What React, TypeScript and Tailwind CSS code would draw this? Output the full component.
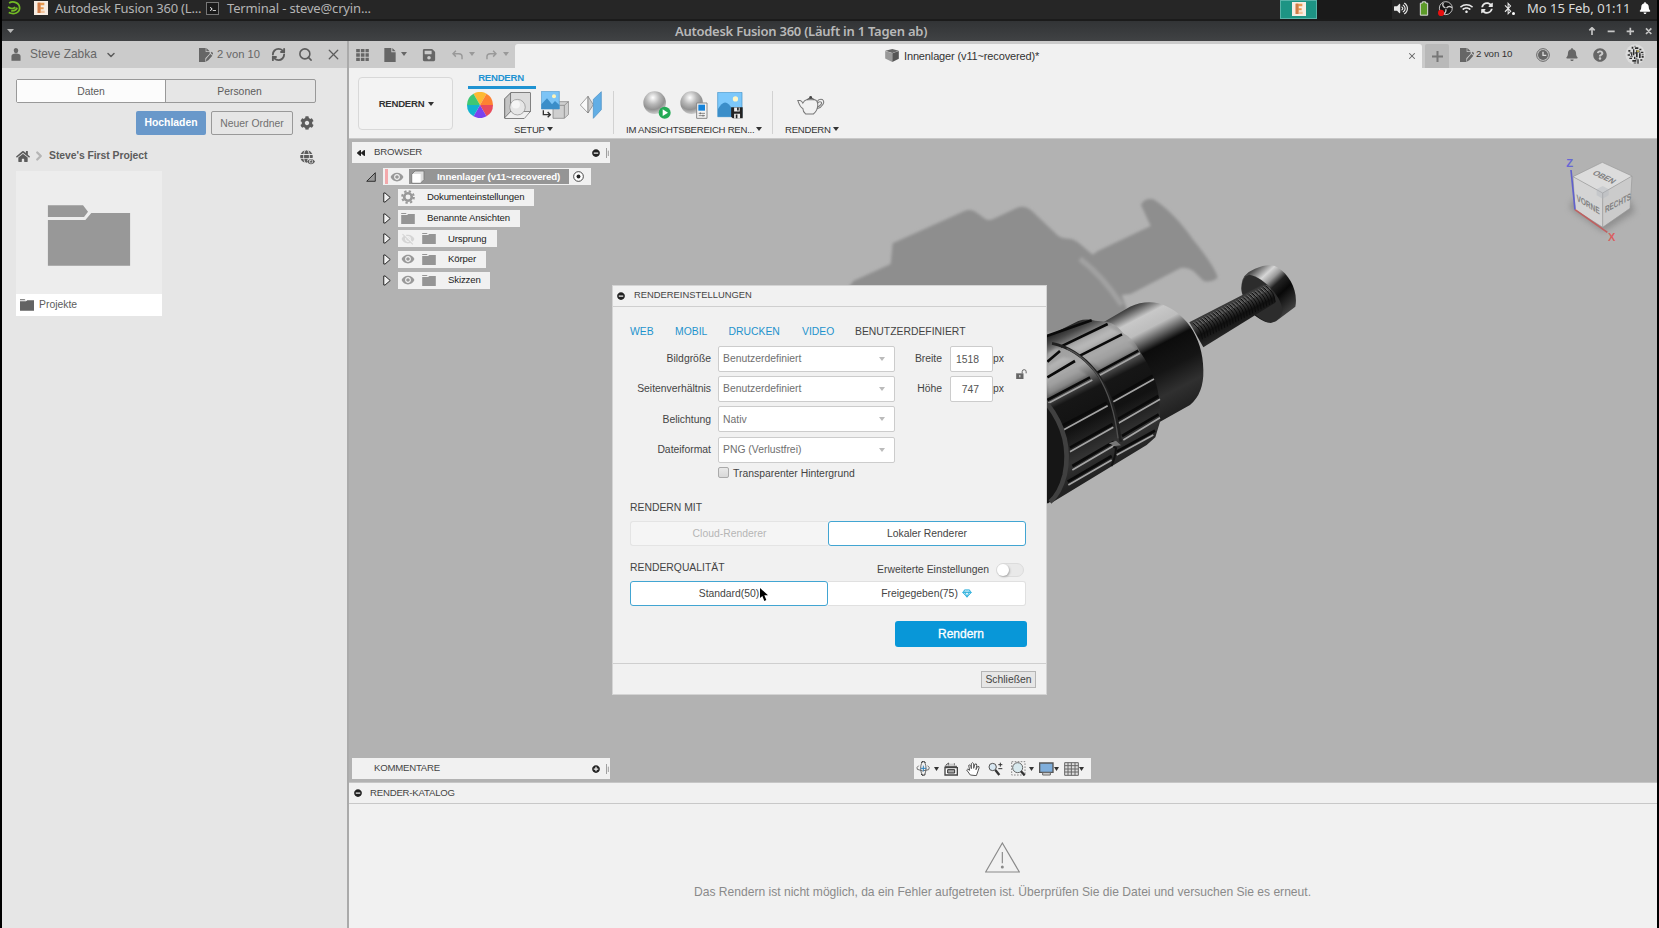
import React from "react";
import {
  FaHome, FaCog, FaBell, FaQuestionCircle, FaSave, FaWifi, FaVolumeUp,
  FaBluetoothB, FaSyncAlt, FaMinusCircle, FaPlusCircle, FaBackward, FaGlobe, FaEye, FaTerminal,
} from "react-icons/fa";
import { MdVisibility, MdVisibilityOff } from "react-icons/md";
import { RefreshCw, Search, X, ChevronDown, ChevronRight } from "lucide-react";

type IconProps = { box: string; className?: string; children: React.ReactNode };

function Icon({ box, className = "", children }: IconProps) {
  return (
    <svg viewBox={box} className={`shrink-0 ${className}`} fill="none">
      {children}
    </svg>
  );
}

function Folder({ className = "" }: { className?: string }) {
  return (
    <Icon box="0 0 42 34" className={className}>
      <path d="M0 0h14l3 3H0zM0 6h18l4-3h20v31H0z" fill="currentColor" />
    </Icon>
  );
}

function Caret({ className = "h-[5px] w-[6px]" }: { className?: string }) {
  return (
    <svg viewBox="0 0 16 12" preserveAspectRatio="none" className={`shrink-0 ${className}`}>
      <path d="M0 0h16L8 12z" fill="currentColor" />
    </svg>
  );
}

function DocPen({ className = "" }: { className?: string }) {
  return (
    <Icon box="0 0 42 42" className={className}>
      <path d="M0 0h20v12h12v5L19 31v11H0zM22 0l10 10H22z" fill="currentColor" />
      <path d="m22 32 12-14 6 5-12 14-8 4zM35 14l3-3 5 5-3 4z" fill="currentColor" />
    </Icon>
  );
}

function FusionLogo({ className = "" }: { className?: string }) {
  return (
    <Icon box="0 0 42 42" className={className}>
      <rect width="42" height="42" fill="#f8ede3" />
      <path d="M11 5h20v8H20v6h9v6h-9v11h-9z" fill="#e89a50" />
      <path d="M11 5h8v31h-8z" fill="#cf7c4a" />
      <path d="M21 29h11v7H21z" fill="#f3c49c" />
    </Icon>
  );
}

function DesktopBar() {
  return (
    <div className="flex h-[21px] shrink-0 items-start border-b-2 border-[#1b1b1b] bg-[#262626] font-['Noto_Sans',sans-serif] text-[13px] leading-[17px] text-[#b4b4b4]">
      <div className="flex w-[1280px] items-start">
        <Icon box="0 0 40 40" className="ml-[5px] mt-[1px] h-[14px] w-[14px]">
          <path d="M6 6c12-8 30 0 30 14S20 40 5 33M3 17c8 6 16 5 21 1M12 28c9 1 15-3 17-9" stroke="#73ba25" strokeWidth="5" />
        </Icon>
        <FusionLogo className="ml-[13px] mt-[1px] h-[14px] w-[14px]" />
        <span className="ml-[7px] w-[151px] whitespace-nowrap tracking-[-0.2px]">Autodesk Fusion 360 (L...</span>
        <span className="mt-[2px] flex h-[13px] w-[13px] items-center justify-center border border-[#777] bg-[#1a1a1a] text-[6px] text-white">
          <FaTerminal />
        </span>
        <span className="ml-[8px] whitespace-nowrap tracking-[-0.16px]">Terminal - steve@cryin...</span>
      </div>
      <div className="-ml-[2px] flex h-[19px] w-[37px] justify-center border border-[#58b3a8] bg-[#1d9484] pt-[1px]">
        <FusionLogo className="h-[14px] w-[14px]" />
      </div>
      <div className="h-[19px] w-[75px] bg-[#1a1a1a]" />
      <FaVolumeUp className="ml-[2px] mt-[2px] h-[13px] w-[14px] text-[#e8e8e8]" />
      <Icon box="0 0 30 44" className="ml-[11px] mt-[1px] h-[15px] w-[10px]">
        <path d="M4 6h6V2h10v4h6v36H4z" fill="#5c9a28" stroke="#ddd" strokeWidth="3" />
      </Icon>
      <Icon box="0 0 44 44" className="ml-[9px] mt-[1px] h-[15px] w-[15px]">
        <circle cx="23" cy="21" r="19" fill="#171717" stroke="#ddd" strokeWidth="2.5" />
        <path d="M22 20c-8-2-10-9-6-14M25 21c5-7 12-6 16-1M23 24c2 9-4 14-10 13" stroke="#ccc" strokeWidth="4" />
        <circle cx="9" cy="35" r="9" fill="#e81010" />
      </Icon>
      <FaWifi className="ml-[7px] mt-[3px] h-[11px] w-[13px] text-[#e8e8e8]" />
      <FaSyncAlt className="ml-[8px] mt-[2px] h-[12px] w-[12px] text-[#e8e8e8]" />
      <span className="ml-[9px] mt-[2px] flex items-end text-[#e8e8e8]">
        <FaBluetoothB className="h-[13px] w-[12px]" />
        <span className="-ml-[2px] h-[3px] w-[3px] rounded-full bg-white" />
      </span>
      <span className="ml-[12px] w-[98px] whitespace-nowrap text-[#dadada]">Mo 15 Feb, 01:11</span>
      <FaBell className="ml-[14px] mt-[2px] h-[12px] w-[12px] text-white" />
    </div>
  );
}

function TitleBar() {
  return (
    <div className="flex h-[20px] shrink-0 items-center bg-gradient-to-b from-[#323436] to-[#404244] font-['Noto_Sans',sans-serif] text-[#b9b9b9]">
      <Caret className="ml-[5px] h-[4px] w-[7px]" />
      <span className="flex-1 pl-[61px] pr-[61px] text-center text-[13px] font-semibold leading-none tracking-[-0.25px]">
        Autodesk Fusion 360 (Läuft in 1 Tagen ab)
      </span>
      <Icon box="0 0 192 24" className="mr-[5px] h-[8px] w-[64px]">
        <path d="M12 24V3M4 10l8-8 8 8M59 13h21M116 13h22M127 2v22M174 4l16 17M190 4l-16 17" stroke="#c6c6c6" strokeWidth="5" />
      </Icon>
    </div>
  );
}

function DataPanel() {
  return (
    <aside className="flex w-[345px] shrink-0 flex-col bg-[#e6e6e6] text-[10.4px] text-[#5c5c5c]">
      <header className="flex h-[27px] shrink-0 items-center bg-[#cbcbcb]">
        <Icon box="0 0 28 40" className="ml-[9px] h-[13px] w-[10px] text-[#666]">
          <path d="M7 8a7 8 0 0 1 14 0 7 8 0 0 1-14 0M0 39V25q0-8 14-8t14 8v14z" fill="currentColor" />
        </Icon>
        <span className="ml-[9px] w-[67px] whitespace-nowrap text-[11.9px] text-[#666]">Steve Zabka</span>
        <ChevronDown className="ml-[8px] h-[12px] w-[12px]" strokeWidth={3} />
        <DocPen className="ml-[82px] h-[14px] w-[14px] text-[#666]" />
        <span className="ml-[4px] w-[44px] whitespace-nowrap text-[11.2px] text-[#666]">2 von 10</span>
        <RefreshCw className="ml-[10px] h-[15px] w-[15px]" strokeWidth={3} />
        <Search className="ml-[12px] h-[15px] w-[15px]" strokeWidth={2.5} />
        <X className="ml-[12px] h-[17px] w-[17px]" strokeWidth={1.8} />
      </header>
      <div className="ml-[14px] mt-[11px] flex h-[24px] w-[300px] rounded-[2px] border border-[#999] leading-[23px]">
        <div className="w-[149px] border-r border-[#999] bg-[#fcfcfc] text-center">Daten</div>
        <div className="flex-1 pr-[2px] text-center">Personen</div>
      </div>
      <div className="ml-[134px] mt-[8px] flex h-[24px] items-center">
        <div className="h-[24px] w-[70px] rounded-[2px] bg-[#6998ca] text-center font-bold leading-[24px] text-white">Hochladen</div>
        <div className="ml-[5px] h-[24px] w-[82px] rounded-[2px] border border-[#999] text-center leading-[24px] text-[#707070]">Neuer Ordner</div>
        <FaCog className="ml-[7px] h-[14px] w-[14px] text-[#5c5c5c]" />
      </div>
      <div className="ml-[14px] mt-[11px] flex h-[20px] items-center">
        <FaHome className="h-[13px] w-[14px]" />
        <ChevronRight className="ml-[2px] h-[14px] w-[14px] text-[#b5b5b5]" strokeWidth={4} />
        <span className="ml-[3px] w-[251px] whitespace-nowrap font-bold tracking-[-0.05px]">Steve's First Project</span>
        <span className="relative">
          <FaGlobe className="h-[13px] w-[13px]" />
          <FaEye className="absolute -bottom-[2px] -right-[2px] h-[7px] w-[8px] rounded-full bg-[#e6e6e6]" />
        </span>
      </div>
      <div className="ml-[14px] mt-[5px] w-[146px]">
        <div className="h-[123px] bg-[#ededed] pl-[31px] pt-[34px]">
          <Icon box="0 0 250 184" className="h-[61px] w-[84px]">
            <path d="M1 1h106l15 19-12 16H1zM1 45h113l18-21h117v159H1z" fill="#989898" />
          </Icon>
        </div>
        <div className="flex h-[22px] items-center bg-white">
          <Folder className="ml-[4px] h-[12px] w-[14px] text-[#636363]" />
          <span className="ml-[5px] pb-[1px]">Projekte</span>
        </div>
      </div>
    </aside>
  );
}

function TabBar() {
  return (
    <div className="flex h-[27px] shrink-0 items-end bg-[#cbcbcb] text-[#666]">
      <div className="flex h-[27px] w-[166px] shrink-0 items-center">
        <Icon box="0 0 38 36" className="ml-[7px] h-[12px] w-[13px]">
          <path d="M0 0h11v10H0zM14 0h11v10H14zM28 0h10v10H28zM0 13h11v10H0zM14 13h11v10H14zM28 13h10v10H28zM0 26h11v10H0zM14 26h11v10H14zM28 26h10v10H28z" fill="currentColor" />
        </Icon>
        <Icon box="0 0 34 42" className="ml-[15px] h-[14px] w-[12px]">
          <path d="M0 0h21v13h13v29H0zM24 0l10 10H24z" fill="currentColor" />
        </Icon>
        <Caret className="-mt-px ml-[5px] h-[4px] w-[6px]" />
        <FaSave className="ml-[15px] h-[14px] w-[14px]" />
        <Icon box="0 0 34 30" className="ml-[16px] h-[10px] w-[11px] text-[#999]">
          <path d="M12 2 3 11l9 9M3 11h18q10 0 10 9v8" stroke="currentColor" strokeWidth="4.5" />
        </Icon>
        <Caret className="-mt-px ml-[6px] h-[4px] w-[6px] text-[#999]" />
        <Icon box="0 0 34 30" className="ml-[11px] h-[10px] w-[11px] text-[#999]">
          <path d="m22 2 9 9-9 9M31 11H13Q3 11 3 20v8" stroke="currentColor" strokeWidth="4.5" />
        </Icon>
        <Caret className="-mt-px ml-[6px] h-[4px] w-[6px] text-[#999]" />
      </div>
      <div className="flex h-[24px] w-[907px] shrink-0 items-center rounded-t-[3px] bg-[#f1f1f1]">
        <Icon box="0 0 42 40" className="ml-[370px] mt-[-1px] h-[13px] w-[14px]">
          <path d="m0 5 22-5 20 5-20 7z" fill="#666" />
          <path d="m0 6 22 7v27L0 29z" fill="#999" />
          <path d="m22 13 20-7v24L22 40z" fill="#555" />
        </Icon>
        <span className="ml-[5px] w-[490px] whitespace-nowrap text-[11px] tracking-[-0.14px] text-[#333]">Innenlager (v11~recovered)*</span>
        <X className="ml-[13px] h-[10px] w-[10px]" strokeWidth={2.5} />
      </div>
      <div className="ml-[3px] flex h-[24px] w-[24px] items-center justify-center rounded-t-[2px] bg-[#b9b9b9]">
        <Icon box="0 0 33 33" className="h-[11px] w-[11px]">
          <path d="M16.5 0v33M0 16.5h33" stroke="#777" strokeWidth="6" />
        </Icon>
      </div>
      <div className="flex h-[27px] items-center">
        <DocPen className="ml-[11px] h-[14px] w-[14px]" />
        <span className="ml-[2px] w-[39px] whitespace-nowrap text-[9.7px] tracking-[-0.1px] text-[#333]">2 von 10</span>
        <Icon box="0 0 42 42" className="ml-[21px] h-[14px] w-[14px]">
          <circle cx="21" cy="21" r="19" stroke="currentColor" strokeWidth="3" />
          <circle cx="21" cy="21" r="15" fill="currentColor" />
          <path d="M21 11v11h10" stroke="#ddd" strokeWidth="4" />
        </Icon>
        <FaBell className="ml-[16px] h-[13px] w-[12px]" />
        <FaQuestionCircle className="ml-[15px] h-[14px] w-[14px]" />
        <Icon box="0 0 63 63" className="ml-[18px] h-[21px] w-[21px]">
          <circle cx="31" cy="31" r="30" fill="#dcdcdc" />
          <path d="M10 18h6v5h-6zM8 31h7v4H8zM13 41h8v4h-8zM20 8h5v6h-5zM24 16h4v18h-4zM30 10h10v5H30zM33 19h5v21h-5zM43 14h6v5h-6zM47 23h8v4h-8zM42 28h5v14h-5zM50 35h6v6h-6zM18 25h4v10h-4zM22 48h12v5H22zM37 46h4v13h-4zM27 38h4v7h-4zM46 46h6v4h-6z" fill="#2c2c2c" />
          <path d="M14 24h5v5h-5zM28 5h4v5h-4zM28 24h5v6h-5zM39 20h6v6h-6zM15 36h9v4h-9zM31 42h6v5h-6zM50 29h6v4h-6zM26 55h8v4h-8z" fill="#777" />
          <path d="M35 19h7v5h-7z" fill="#b3a24a" />
        </Icon>
      </div>
    </div>
  );
}

function Disk() {
  return (
    <g>
      <path d="M42 46h35v34H47l-5-5z" fill="#222" />
      <path d="M51 47h17v12H51zM51 66h18v14H51z" fill="#eee" />
      <path d="M60 47h5v9h-5zM56 68h5v12h-5z" fill="#222" />
    </g>
  );
}

function Sphere({ id }: { id: string }) {
  return (
    <g>
      <defs>
        <radialGradient id={id} cx="0.42" cy="0.28" r="0.75">
          <stop offset="0" stopColor="#fff" />
          <stop offset="0.4" stopColor="#b8b8b8" />
          <stop offset="0.7" stopColor="#929292" />
          <stop offset="1" stopColor="#d5d5d5" />
        </radialGradient>
      </defs>
      <circle cx="35" cy="35" r="34" fill={`url(#${id})`} />
    </g>
  );
}

const wheel = [
  ["M39 39 19.500 5.200A39 39 0 0 1 58.500 5.200Z", "#fdb932"],
  ["M39 39 58.500 5.200A39 39 0 0 1 78 39Z", "#fd8232"],
  ["M39 39 78 39A39 39 0 0 1 58.500 72.800Z", "#e94b5c"],
  ["M39 39 58.500 72.800A39 39 0 0 1 19.500 72.800Z", "#7a42f0"],
  ["M39 39 19.500 72.800A39 39 0 0 1 0 39Z", "#12b3cf"],
  ["M39 39 0 39A39 39 0 0 1 19.500 5.200Z", "#3fc773"],
];

function RibbonLabel({ children }: { children: string }) {
  return (
    <div className="flex h-[11px] items-end whitespace-nowrap text-[9.6px] leading-[11px] tracking-[-0.26px] text-[#333]">
      {children}
      <Caret className="mb-[4px] ml-[2px] h-[4px] w-[6px]" />
    </div>
  );
}

function Ribbon() {
  return (
    <div className="flex h-[71px] shrink-0 border-b border-[#c9c9c9] bg-[#f1f1f1]">
      <div className="ml-[9px] mt-[9px] flex h-[53px] w-[95px] items-center justify-center rounded-[4px] border border-[#d8d8d8] bg-[#f3f3f3] text-[9.6px] font-bold tracking-[-0.25px] text-[#333]">
        <span className="pl-[2px] pt-px">RENDERN</span>
        <Caret className="ml-[4px] h-[4px] w-[6px]" />
      </div>
      <div className="ml-[15px] w-[145px]">
        <div className="h-[21px] w-[68px] border-b-[3px] border-[#1f93d2] pr-[2px] pt-[3px] text-center text-[9.6px] font-bold leading-[13px] tracking-[-0.25px] text-[#1f93d2]">RENDERN</div>
        <div className="flex h-[35px] items-start pt-[3px]">
          <Icon box="0 0 78 78" className="-ml-px h-[26px] w-[26px]">
            {wheel.map(([d, fill]) => (
              <path key={fill} d={d} fill={fill} />
            ))}
          </Icon>
          <Icon box="0 0 80 80" className="ml-[11px] h-[27px] w-[27px]">
            <path d="M2 20 20 2h58v56L60 78H2z" fill="#c4c4c4" stroke="#555" strokeWidth="2.500" />
            <path d="M20 2v56H78M20 58 2 77" stroke="#555" strokeWidth="2.500" />
            <path d="M21 3h56v54H21z" fill="#dcdcdc" />
            <path d="M3 77 20 59h56L60 77z" fill="#efefef" />
            <circle cx="40" cy="45" r="23" fill="#e6e6e6" stroke="#888" strokeWidth="2" />
            <circle cx="35" cy="37" r="12" fill="#f5f5f5" />
          </Icon>
          <Icon box="0 0 84 84" className="-mt-px ml-[10px] h-[28px] w-[28px]">
            <path d="M36 42 48 32h35v38L70 82H36z" fill="#cfcfcf" stroke="#777" strokeWidth="2" />
            <path d="M36 43h34v38M70 43l12-11" stroke="#777" strokeWidth="2" />
            <path d="M1 1h54v53H1z" fill="#7cc4f6" stroke="#5597c8" strokeWidth="2" />
            <path d="M1 54V40l17-18 15 18 9-10 13 12v12z" fill="#3b8ec9" />
            <circle cx="39" cy="16" r="6" fill="#fff3b8" />
            <path d="M0 57h33v27H0z" fill="#f1f1f1" />
            <path d="M7 58v13h20M20 63l8 8-8 8" stroke="#333" strokeWidth="4" />
          </Icon>
          <Icon box="0 0 66 84" className="-mt-px ml-[11px] h-[28px] w-[22px]">
            <path d="M1 42 24 16v50z" fill="#fafafa" stroke="#777" strokeWidth="2" />
            <path d="m24 16 16 25-16 25z" fill="#ccc" stroke="#777" strokeWidth="2" />
            <path d="m40 25 24-23v54L40 82z" fill="#62aee5" stroke="#458cc2" strokeWidth="2" />
          </Icon>
        </div>
        <div className="flex pl-[46px]"><RibbonLabel>SETUP</RibbonLabel></div>
      </div>
      <div className="mt-[23px] h-[43px] w-px bg-[#d2d2d2]" />
      <div className="ml-[12px] mt-[23px] w-[146px]">
        <div className="flex h-[33px] items-start pl-[17px]">
          <Icon box="0 0 84 84" className="h-[28px] w-[28px]">
            <Sphere id="sphere-run" />
            <circle cx="65" cy="65" r="18" fill="#23aa55" />
            <path d="m59 55 16 10-16 10z" fill="#fff" />
          </Icon>
          <Icon box="0 0 84 84" className="ml-[9px] h-[28px] w-[28px]">
            <Sphere id="sphere-settings" />
            <path d="M50 36h31v46H50z" fill="#f4f4f4" stroke="#888" strokeWidth="3" />
            <path d="M55 41h20v18H55z" fill="#1583da" />
            <path d="M56 67h19M56 74h19M61 64v6M69 71v6" stroke="#555" strokeWidth="2" />
          </Icon>
          <Icon box="0 0 80 82" className="ml-[9px] mt-px h-[27px] w-[27px]">
            <path d="M1 1h74v74H1z" fill="#7cc8fb" stroke="#3f8fc4" strokeWidth="2" />
            <path d="M2 75V52q22-40 43 0v23z" fill="#3b8ec9" />
            <circle cx="55" cy="21" r="8" fill="#fff6c6" />
            <Disk />
          </Icon>
        </div>
        <RibbonLabel>IM ANSICHTSBEREICH REN...</RibbonLabel>
      </div>
      <div className="mt-[23px] h-[43px] w-px bg-[#d2d2d2]" />
      <div className="ml-[12px] mt-[23px]">
        <div className="flex h-[33px] items-start pl-[12px] pt-[5px]">
          <Icon box="0 0 82 56" className="h-[19px] w-[28px]">
            <path d="M2 13h7q5 1 8 8 4-8 11-10h24q8 2 9 14 0 18-13 28H25q-8-7-8-16Q9 34 2 13zM59 17q4-9 15-7 8 6 2 15-6 10-16 12M60 22q5-7 11-4 3 4-2 8-4 5-9 6" stroke="#777" strokeWidth="3" />
            <path d="M29 11q11-8 22 0" stroke="#666" strokeWidth="3" />
            <circle cx="40" cy="4" r="4" fill="#444" />
          </Icon>
        </div>
        <RibbonLabel>RENDERN</RibbonLabel>
      </div>
    </div>
  );
}

const threads = Array.from({ length: 27 }, (_, i) => ({ x: 1060 + i * 8.4, y: 430 - i * 4.3 }));

const lightGrooves =
  "M625 670 757 600M670 750 803 677M690 815 820 742M697 870 825 795M685 915 815 840M775 588 900 520M820 665 942 597M835 730 960 658M850 780 960 713M830 825 940 765";
const darkGrooves =
  "M620 468 755 421M662 500 803 432M622 545 660 513M622 592 705 543M720 527 846 463M772 578 895 512M818 655 938 587M832 718 955 648M846 768 956 703M622 660 750 592M665 738 800 668M690 803 818 732M697 858 822 785M683 905 815 828M830 815 945 752";
const litFacets =
  "M672 502 800 438 838 458 722 516zM738 530 850 474 892 506 780 566zM624 520 648 505 664 507 626 532zM624 558 668 532 700 536 626 578zM624 606 706 560 742 584 626 646z";

function Model() {
  return (
    <svg viewBox="0 0 1440 1020" className="absolute left-[491px] top-[41px] h-[340px] w-[480px]" fill="none">
      <defs>
        <filter id="soft" x="-10%" y="-10%" width="120%" height="120%"><feGaussianBlur stdDeviation="5" /></filter>
        <filter id="sheen" x="-10%" y="-10%" width="120%" height="120%"><feGaussianBlur stdDeviation="3" /></filter>
        <linearGradient id="collar" gradientUnits="userSpaceOnUse" x1="840" y1="390" x2="1010" y2="719">
          <stop offset="0" stopColor="#2a2a2a" /><stop offset="0.05" stopColor="#606060" /><stop offset="0.13" stopColor="#c8c8c8" />
          <stop offset="0.24" stopColor="#bdbdbd" /><stop offset="0.33" stopColor="#5a5a5a" /><stop offset="0.4" stopColor="#0c0c0c" />
          <stop offset="0.6" stopColor="#151515" /><stop offset="0.78" stopColor="#303030" /><stop offset="1" stopColor="#1c1c1c" />
        </linearGradient>
        <linearGradient id="knurl" gradientUnits="userSpaceOnUse" x1="680" y1="430" x2="880" y2="830">
          <stop offset="0" stopColor="#161616" /><stop offset="0.07" stopColor="#4a4a4a" /><stop offset="0.15" stopColor="#a0a0a0" />
          <stop offset="0.29" stopColor="#a8a8a8" /><stop offset="0.38" stopColor="#666" /><stop offset="0.47" stopColor="#161616" /><stop offset="0.65" stopColor="#121212" />
          <stop offset="0.85" stopColor="#333" /><stop offset="1" stopColor="#222" />
        </linearGradient>
        <linearGradient id="facet" gradientUnits="userSpaceOnUse" x1="700" y1="440" x2="780" y2="600">
          <stop offset="0" stopColor="#777" /><stop offset="0.35" stopColor="#b8b8b8" /><stop offset="0.7" stopColor="#a0a0a0" /><stop offset="1" stopColor="#5a5a5a" />
        </linearGradient>
        <linearGradient id="head" gradientUnits="userSpaceOnUse" x1="1240" y1="260" x2="1360" y2="390">
          <stop offset="0" stopColor="#333" /><stop offset="0.24" stopColor="#d6d6d6" /><stop offset="0.36" stopColor="#999" /><stop offset="0.48" stopColor="#222" />
          <stop offset="0.65" stopColor="#080808" /><stop offset="1" stopColor="#444" />
        </linearGradient>
        <linearGradient id="shaft" gradientUnits="userSpaceOnUse" x1="1150" y1="370" x2="1190" y2="450">
          <stop offset="0" stopColor="#333" /><stop offset="0.25" stopColor="#484848" /><stop offset="0.6" stopColor="#101010" /><stop offset="1" stopColor="#282828" />
        </linearGradient>
      </defs>
      <g filter="url(#soft)">
        <path d="M20 330 40 303 152 252 158 190 372 94Q390 86 406 95L436 117Q446 123 458 118L530 84Q552 74 575 92L655 168Q668 177 688 176 705 178 720 192L758 224 775 212 932 138 903 75Q912 54 940 58 1000 95 1060 180 1125 260 1133 293 1110 310 1090 302L1060 273Q1040 260 1022 264L872 342 845 345 862 390 800 460H560V330z" fill="#8e8e8e" />
        <path d="M720 236Q790 290 845 375" stroke="#a2a2a2" strokeWidth="15" />
      </g>
      <path d="M1204 315Q1206 282 1245 266 1290 248 1312 262C1350 285 1375 335 1366 380L1308 424Q1292 431 1275 425C1235 410 1200 360 1204 315Z" fill="url(#head)" />
      <path d="M1204 325Q1206 289 1228 284C1270 292 1322 345 1328 390Q1324 420 1292 429C1245 420 1204 360 1204 325Z" fill="#2c2c2c" />
      <path d="M1048 427 1270 313Q1305 325 1306 368L1090 502z" fill="url(#shaft)" />
      {threads.map(({ x, y }) => (
        <path key={x} d={`M${x} ${y}q26 20 27 48`} stroke="#0b0b0b" strokeWidth="3" />
      ))}
      {threads.map(({ x, y }) => (
        <path key={x} d={`M${x} ${y - 3}q8 4 13 13`} stroke="#858585" strokeWidth="2" />
      ))}
      <path d="M790 427 870 380Q915 360 955 370C1030 390 1090 470 1090 570Q1092 640 1050 675L955 728 880 520z" fill="url(#collar)" />
      <path d="M600 480 715 423Q740 415 765 422L800 425Q830 432 850 460 880 475 900 515 925 550 940 590 962 635 960 725L946 772 920 795 640 965 610 970z" fill="url(#knurl)" />
      <path d={litFacets} fill="url(#facet)" filter="url(#sheen)" />
      <path d={darkGrooves} stroke="#0a0a0a" strokeWidth="8" />
      <path d={lightGrooves} stroke="#a5a5a5" strokeWidth="5" />
      <path d="M636 490Q710 505 765 572 825 650 842 785" stroke="#202020" strokeWidth="8" />
      <path d="M680 505Q735 530 775 588 820 660 834 775" stroke="#505050" strokeWidth="4" />
      <path d="M600 660C670 720 690 800 674 900L625 970H600z" fill="#161616" />
      <path d="M622 672C675 740 690 810 674 885Q660 940 630 966" stroke="#404040" strokeWidth="14" />
      <path d="m806 790 22-8 15 14-18 2z" fill="#777" />
      <path d="m820 800 8 4q-2 30-14 54" stroke="#111" strokeWidth="6" />
    </svg>
  );
}

function ViewCube() {
  return (
    <svg viewBox="0 0 357 330" className="absolute left-[1191px] top-[1px] h-[110px] w-[119px]" fill="none">
      <defs><filter id="cubeShadow" x="-30%" y="-30%" width="160%" height="160%"><feGaussianBlur stdDeviation="9" /></filter></defs>
      <path d="M90 205 190 275 285 215 270 180 100 180z" fill="#777" opacity="0.6" filter="url(#cubeShadow)" />
      <path d="m99 110 88-43 89 41-88 51z" fill="#dcdcdc" />
      <path d="m99 110 89 49v103l-83-53z" fill="#d4d4d4" />
      <path d="m276 108-88 51v103l82-57z" fill="#cbcbcb" />
      <path d="m99 110 88-43 89 41-88 51zM188 159v103M99 110l6 99 83 53 82-57 6-97" stroke="#999" strokeWidth="2" />
      <path d="m170 148 18-10 18 10v18l-18 10-18-10z" fill="#aeb4bc" opacity="0.4" />
      <path d="m93 90 12 119" stroke="#6060cc" strokeWidth="5" />
      <path d="m105 209 97 68" stroke="#c06060" strokeWidth="5" />
      <g fontFamily="Liberation Sans, sans-serif" fontWeight="bold" fill="#808080">
        <text transform="matrix(.8 .38 -.72 .6 155 102)" fontSize="27">OBEN</text>
        <text transform="matrix(.7 .42 .05 1 110 182)" fontSize="28">VORNE</text>
        <text transform="matrix(.68 -.36 0 1 195 219)" fontSize="28">RECHTS</text>
        <text x="79" y="82" fontSize="34" fill="#6767d4">Z</text>
        <text x="204" y="302" fontSize="33" fill="#da6060">X</text>
      </g>
    </svg>
  );
}

function PanelGrip() {
  return (
    <Icon box="0 0 9 30" className="ml-[6px] h-[10px] w-[3px]">
      <path d="M1.500 0v30M7 8v16" stroke="#777" strokeWidth="2" />
    </Icon>
  );
}

type Row = { label: string; icon: "gear" | "folder"; eye?: "on" | "off"; width: string };
const rows: Row[] = [
  { label: "Dokumenteinstellungen", icon: "gear", width: "w-[136px]" },
  { label: "Benannte Ansichten", icon: "folder", width: "w-[122px]" },
  { label: "Ursprung", icon: "folder", eye: "off", width: "w-[99px]" },
  { label: "Körper", icon: "folder", eye: "on", width: "w-[88px]" },
  { label: "Skizzen", icon: "folder", eye: "on", width: "w-[92px]" },
];

function BrowserTree() {
  return (
    <div className="absolute left-[3px] top-[3px] w-[258px] text-[9.6px] tracking-[-0.14px] text-[#222]">
      <div className="flex h-[21px] items-center bg-[#f1f1f1]">
        <FaBackward className="ml-[5px] h-[8px] w-[8px]" />
        <span className="ml-[9px] w-[218px] tracking-[-0.22px] text-[#444]">BROWSER</span>
        <FaMinusCircle className="h-[8px] w-[8px]" />
        <PanelGrip />
      </div>
      <div className="mt-[5px] flex h-[17px] items-center">
        <Icon box="0 0 28 28" className="ml-[14px] h-[10px] w-[10px]">
          <path d="M26 2v24H2z" fill="#999" stroke="#222" strokeWidth="2.500" />
        </Icon>
        <div className="ml-[7px] flex h-[17px] w-[208px] items-center bg-[#f1f1f1]">
          <span className="ml-[2px] h-[15px] w-[3px] bg-[#f3a9ac]" />
          <MdVisibility className="ml-[2px] h-[14px] w-[14px] text-[#999]" />
          <div className="ml-[5px] flex h-[15px] w-[160px] items-center bg-[#959595]">
            <Icon box="0 0 42 42" className="ml-[2px] h-[14px] w-[14px]">
              <path d="M3 12 12 3h27v26L29 39H3z" fill="#ddd" stroke="#777" strokeWidth="2.500" />
              <path d="M4 12h25v26H4z" fill="#fff" />
            </Icon>
            <span className="ml-[12px] whitespace-nowrap pt-px text-[9.7px] font-bold tracking-[-0.1px] text-white">Innenlager (v11~recovered)</span>
          </div>
          <Icon box="0 0 34 34" className="ml-[4px] h-[11px] w-[11px]">
            <circle cx="17" cy="17" r="15" stroke="#222" strokeWidth="2.500" fill="#fff" />
            <circle cx="17" cy="17" r="6" fill="#222" />
          </Icon>
        </div>
      </div>
      <div className="mt-[1.500px] flex flex-col">
        {rows.map((r) => (
          <div key={r.label} className="mt-[1px] flex h-[19.700px] items-center">
            <Icon box="0 0 24 34" className="ml-[31px] h-[11px] w-[8px]">
              <path d="M2 3v28h4L22 17 6 3z" fill="#eee" stroke="#222" strokeWidth="3" />
            </Icon>
            <div className={`ml-[7px] flex h-[17px] items-center whitespace-nowrap bg-[#f1f1f1] ${r.width}`}>
              {r.eye && (
                <span className={`ml-[3px] w-[18px] ${r.eye === "on" ? "text-[#999]" : "text-[#d5d5d5]"}`}>
                  {r.eye === "on" ? <MdVisibility className="h-[14px] w-[14px]" /> : <MdVisibilityOff className="h-[14px] w-[14px]" />}
                </span>
              )}
              {r.icon === "gear" ? (
                <Icon box="0 0 24 24" className="ml-[3px] h-[14px] w-[14px]">
                  <circle cx="12" cy="12" r="10" stroke="#999" strokeWidth="3.500" strokeDasharray="4 3.850" />
                  <circle cx="12" cy="12" r="6.500" stroke="#999" strokeWidth="4.500" />
                </Icon>
              ) : (
                <Folder className="ml-[3px] h-[11px] w-[14px] text-[#959595]" />
              )}
              <span className="ml-[12px]">{r.label}</span>
            </div>
          </div>
        ))}
      </div>
    </div>
  );
}

function Field({ label, value }: { label: string; value: string }) {
  return (
    <div className="mb-[4.200px] flex h-[26px] items-center">
      <span className="w-[81px] pr-[7px] text-right">{label}</span>
      <div className="flex h-[26px] w-[177px] items-center justify-between rounded-[2px] border border-[#ccc] bg-white pl-[4px] pr-[9px] text-[#707070]">
        {value}
        <Caret className="h-[4px] w-[6px] text-[#bbb]" />
      </div>
    </div>
  );
}

function SizeField({ label, value }: { label: string; value: string }) {
  return (
    <div className="mb-[4.200px] flex h-[26px] items-center">
      <span className="w-[44px] pr-[8px] text-right">{label}</span>
      <div className="h-[26px] w-[43px] rounded-[2px] border border-[#ccc] bg-white pr-[13px] text-right leading-[25px] text-[#555]">{value}</div>
      <span>px</span>
    </div>
  );
}

function RenderDialog() {
  return (
    <div className="absolute left-[263px] top-[146px] flex h-[410px] w-[435px] flex-col border border-[#d4d4d4] bg-[#f1f1f1] text-[10.38px] text-[#444]">
      <div className="flex h-[21px] shrink-0 items-center border-b border-[#cfcfcf] text-[9.4px]">
        <FaMinusCircle className="ml-[4px] h-[8px] w-[8px] text-[#222]" />
        <span className="ml-[9px] pb-px">RENDEREINSTELLUNGEN</span>
      </div>
      <div className="ml-[17px] mt-[17px] flex h-[16px] items-center whitespace-nowrap text-[#1e93cd]">
        <span className="w-[45px]">WEB</span>
        <span className="w-[53.500px]">MOBIL</span>
        <span className="w-[73.500px]">DRUCKEN</span>
        <span className="w-[53px]">VIDEO</span>
        <span className="text-[#444]">BENUTZERDEFINIERT</span>
      </div>
      <div className="ml-[24px] mt-[6px] flex">
        <div>
          <Field label="Bildgröße" value="Benutzerdefiniert" />
          <Field label="Seitenverhältnis" value="Benutzerdefiniert" />
          <Field label="Belichtung" value="Nativ" />
          <Field label="Dateiformat" value="PNG (Verlustfrei)" />
        </div>
        <div className="ml-[11px]">
          <SizeField label="Breite" value="1518" />
          <SizeField label="Höhe" value="747" />
        </div>
        <Icon box="0 0 32 30" className="ml-[12px] mt-[23px] h-[10px] w-[11px]">
          <path d="M0 13h22v17H0z" fill="#666" />
          <path d="M18 13V8q0-6 6-6t6 6v5" stroke="#666" strokeWidth="3" />
          <path d="M11 18v7" stroke="#eee" strokeWidth="3" />
        </Icon>
      </div>
      <div className="ml-[105px] flex h-[14px] items-center">
        <span className="h-[11px] w-[11px] -translate-y-px rounded-[2px] border border-[#aaa] bg-gradient-to-b from-[#e9e9e9] to-[#d8d8d8]" />
        <span className="ml-[4px]">Transparenter Hintergrund</span>
      </div>
      <div className="ml-[17px] mt-[20px] flex h-[14px] items-center">RENDERN MIT</div>
      <div className="ml-[17px] mt-[6.200px] flex h-[25px] w-[396px] text-center leading-[23px]">
        <div className="w-[198px] rounded-l-[3px] border border-r-0 border-[#e4e4e4] bg-[#f5f5f5] text-[#b5b5b5]">Cloud-Renderer</div>
        <div className="w-[198px] rounded-[3px] border border-[#42a5d2] bg-white">Lokaler Renderer</div>
      </div>
      <div className="ml-[17px] mt-[14px] flex h-[21px] w-[396px] items-start">
        <span className="leading-[15px]">RENDERQUALITÄT</span>
        <span className="ml-auto mt-[2px] leading-[15px]">Erweiterte Einstellungen</span>
        <span className="ml-[7px] mr-[2px] mt-[3px] flex h-[14px] w-[28px] rounded-full border border-[#dcdcdc] bg-[#e9e9e9]">
          <span className="h-[12px] w-[12px] rounded-full bg-white shadow-[1px_1px_2px_#aaa]" />
        </span>
      </div>
      <div className="ml-[17px] flex h-[25px] w-[396px] text-center leading-[23px]">
        <div className="w-[198px] rounded-[3px] border border-[#42a5d2] bg-white">Standard(50)</div>
        <div className="flex w-[198px] items-center justify-center rounded-r-[3px] border border-l-0 border-[#e0e0e0] bg-white">
          Freigegeben(75)
          <Icon box="0 0 30 26" className="ml-[4px] h-[9px] w-[10px]">
            <path d="M8 2h14l6 8-13 14L2 10zM2 10h26M8 2l2 8 5 14 5-14 2-8M15 2v8" fill="#a5e0f2" stroke="#2aaedc" strokeWidth="2.500" />
          </Icon>
        </div>
      </div>
      <div className="ml-[282px] mt-[15px] h-[26px] w-[132px] rounded-[3px] bg-[#0897d8] text-center text-[12px] leading-[27px] text-white [-webkit-text-stroke:0.3px_white]">Rendern</div>
      <div className="mt-auto flex h-[31px] shrink-0 items-center justify-end border-t border-[#cfcfcf] pr-[10px] pt-[1px]">
        <div className="h-[17px] w-[55px] border border-[#b5b5b5] bg-[#e6e6e6] text-center leading-[15px]">Schließen</div>
      </div>
    </div>
  );
}

function NavBar() {
  return (
    <div className="absolute left-[565px] top-[619px] flex h-[21px] w-[177px] items-center bg-[#f1f1f1] text-[#333]">
      <Icon box="0 0 45 45" className="ml-[2px] h-[15px] w-[15px]">
        <ellipse cx="22" cy="22" rx="8" ry="20" stroke="#555" strokeWidth="2.5" />
        <path d="M8 14Q0 20 4 25q14 9 34 1 5-6-3-12" stroke="#555" strokeWidth="2.5" />
        <path d="M22 14v17M14 22h17" stroke="#3182bd" strokeWidth="3" />
        <path d="m15 5 7-5 7 5M15 39l7 6 7-6" stroke="#333" strokeWidth="3" />
      </Icon>
      <Caret className="ml-[3px] h-[4px] w-[5px]" />
      <Icon box="0 0 42 42" className="ml-[5px] h-[14px] w-[14px]">
        <path d="M3 17h37v22H3z" fill="#fff" stroke="#444" strokeWidth="4" />
        <path d="M11 23h21v10H11z" fill="#aaa" stroke="#333" strokeWidth="3" />
        <path d="M2 13h37M5 10 14 3v7M31 4v6" stroke="#444" strokeWidth="3" />
        <path d="M14 5h17v5H14z" fill="#ccc" />
      </Icon>
      <Icon box="0 0 42 42" className="ml-[8px] h-[14px] w-[14px]">
        <path d="M13 39 2 24q2-6 9 1L8 10q3-5 7 4l1 6V5q4-6 7 0v14l4-13q6-2 5 4l-2 13 5-10q6-1 4 5l-5 15-3 8z" fill="#fff" stroke="#555" strokeWidth="3" />
      </Icon>
      <Icon box="0 0 45 42" className="ml-[8px] h-[14px] w-[15px]">
        <circle cx="14" cy="15" r="11" fill="#d9e8f2" stroke="#555" strokeWidth="3" />
        <path d="m22 24 12 15" stroke="#333" strokeWidth="7" />
        <path d="M37 2v12M31 8h12M31 20h12" stroke="#333" strokeWidth="3" />
      </Icon>
      <Icon box="0 0 45 45" className="ml-[8px] h-[15px] w-[15px]">
        <path d="M2 2h40v40H2z" stroke="#888" strokeWidth="3" strokeDasharray="5 4" />
        <circle cx="20" cy="20" r="15" fill="#d7e8ed" stroke="#666" strokeWidth="3" />
        <path d="m30 31 11 12" stroke="#333" strokeWidth="7" />
      </Icon>
      <Caret className="ml-[3px] h-[4px] w-[5px]" />
      <Icon box="0 0 45 42" className="ml-[5px] h-[14px] w-[15px]">
        <path d="M2 3h40v28H2z" fill="#7faedb" stroke="#555" strokeWidth="4" />
        <path d="M11 39h23v-7H11z" fill="#ddd" stroke="#666" strokeWidth="3" />
      </Icon>
      <Caret className="h-[4px] w-[5px]" />
      <Icon box="0 0 45 42" className="ml-[5px] h-[14px] w-[15px]">
        <path d="M2 2h41v38H2z" fill="#ddd" />
        <path d="M2 2h41v38H2zM2 11h41M2 21h41M2 30h41M12 2v38M22 2v38M33 2v38" stroke="#666" strokeWidth="3" />
      </Icon>
      <Caret className="h-[4px] w-[5px]" />
    </div>
  );
}

function Viewport() {
  return (
    <div className="relative h-[643px] shrink-0 overflow-hidden bg-[#b2b2b2]">
      <Model />
      <ViewCube />
      <BrowserTree />
      <RenderDialog />
      <svg viewBox="0 0 24 39" className="absolute left-[411px] top-[449px] h-[13px] w-[8px]">
        <path d="M0 0v30l7-6 6 15 6-3-6-14h11z" fill="#000" />
      </svg>
      <div className="absolute left-[3px] top-[619px] flex h-[21px] w-[258px] items-center bg-[#f1f1f1] text-[9.6px] tracking-[-0.21px] text-[#444]">
        <span className="ml-[22px] w-[218px]">KOMMENTARE</span>
        <FaPlusCircle className="h-[8px] w-[8px] text-[#222]" />
        <PanelGrip />
      </div>
      <NavBar />
    </div>
  );
}

function RenderCatalog() {
  return (
    <div className="flex flex-1 flex-col border-t border-[#c6c6c6] bg-[#f1f1f1]">
      <div className="flex h-[21px] shrink-0 items-center border-b border-[#c8c8c8] text-[9.6px] tracking-[-0.2px] text-[#444]">
        <FaMinusCircle className="ml-[5px] h-[8px] w-[8px] text-[#222]" />
        <span className="ml-[8px] pt-px">RENDER-KATALOG</span>
      </div>
      <div className="flex flex-col items-center pr-[1px] pt-[38px] text-[#8a8a8a]">
        <Icon box="0 0 105 93" className="h-[31px] w-[35px]">
          <path d="M52 3 2 90h101zM52 30v34" stroke="currentColor" strokeWidth="3.500" />
          <circle cx="52" cy="75" r="4.500" fill="currentColor" />
        </Icon>
        <p className="mt-[10px] whitespace-nowrap text-[12.080px] leading-[18px]">
          Das Rendern ist nicht möglich, da ein Fehler aufgetreten ist. Überprüfen Sie die Datei und versuchen Sie es erneut.
        </p>
      </div>
    </div>
  );
}

export default function App() {
  return (
    <div className="flex h-[928px] w-[1659px] flex-col overflow-hidden border-x-2 border-black bg-[#f1f1f1] font-['Liberation_Sans',Arial,sans-serif]">
      <DesktopBar />
      <TitleBar />
      <div className="flex min-h-0 flex-1">
        <DataPanel />
        <main className="flex min-w-0 flex-1 flex-col border-l-2 border-[#aaa]">
          <TabBar />
          <Ribbon />
          <Viewport />
          <RenderCatalog />
        </main>
      </div>
    </div>
  );
}
